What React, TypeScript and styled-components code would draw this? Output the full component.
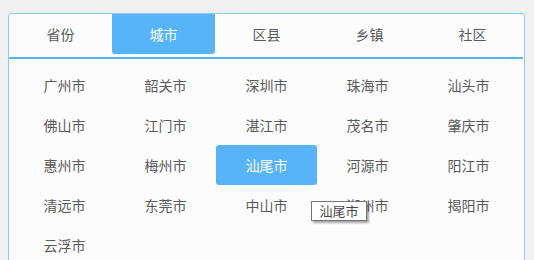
import React from "react";
import styled, { createGlobalStyle } from "styled-components";

const Global = createGlobalStyle`
  html, body { margin: 0; padding: 0; background: #f1f1f1; }
  body { font-family: "Noto Sans CJK SC", "Noto Sans", sans-serif; }
`;

const Panel = styled.div`
  margin: 13px 0 0 8px;
  width: 515px;
  border: 1px solid #8ecbf8;
  border-radius: 3px;
  background: #fcfcfc;
  padding-bottom: 20px;
`;

const Tabs = styled.div`
  display: grid;
  grid-template-columns: repeat(5, 103px);
  height: 40px;
  margin-bottom: 3px;
`;

const Tab = styled.div<{ $active?: boolean }>`
  display: flex;
  align-items: center;
  justify-content: center;
  font-size: 14px;
  color: ${(p) => (p.$active ? "#ffffff" : "#5a5a5a")};
  background: ${(p) => (p.$active ? "#57b4f8" : "transparent")};
  border-radius: 0 0 3px 3px;
`;

const Line = styled.div`
  height: 2px;
  margin-right: 1px;
  background: #57b4f8;
`;

const Grid = styled.div`
  display: grid;
  grid-template-columns: repeat(5, 101px);
  grid-auto-rows: 40px;
  padding: 6px 0 0 5px;
`;

const Item = styled.div<{ $active?: boolean }>`
  position: relative;
  display: flex;
  align-items: center;
  justify-content: center;
  font-size: 14px;
  color: ${(p) => (p.$active ? "#ffffff" : "#5a5a5a")};
  background: ${(p) => (p.$active ? "#57b4f8" : "transparent")};
  border-radius: 3px;
`;

const Tip = styled.div`
  position: absolute;
  left: 95px;
  top: 56px;
  width: 44px;
  padding: 0 5px;
  height: 18px;
  line-height: 18px;
  font-size: 13px;
  color: #444;
  text-align: center;
  background: #fff;
  border: 1px solid #767676;
  box-shadow: 2px 2px 2px rgba(0, 0, 0, 0.35);
  white-space: nowrap;
  z-index: 2;
`;

const tabs = ["省份", "城市", "区县", "乡镇", "社区"];
const cities = [
  "广州市", "韶关市", "深圳市", "珠海市", "汕头市",
  "佛山市", "江门市", "湛江市", "茂名市", "肇庆市",
  "惠州市", "梅州市", "汕尾市", "河源市", "阳江市",
  "清远市", "东莞市", "中山市", "潮州市", "揭阳市",
  "云浮市",
];

export default function App() {
  return (
    <>
      <Global />
      <Panel>
        <Tabs>
          {tabs.map((t) => (
            <Tab key={t} $active={t === "城市"}>{t}</Tab>
          ))}
        </Tabs>
        <Line />
        <Grid>
          {cities.map((c) => (
            <Item key={c} $active={c === "汕尾市"}>
              {c}
              {c === "汕尾市" && <Tip>汕尾市</Tip>}
            </Item>
          ))}
        </Grid>
      </Panel>
    </>
  );
}
